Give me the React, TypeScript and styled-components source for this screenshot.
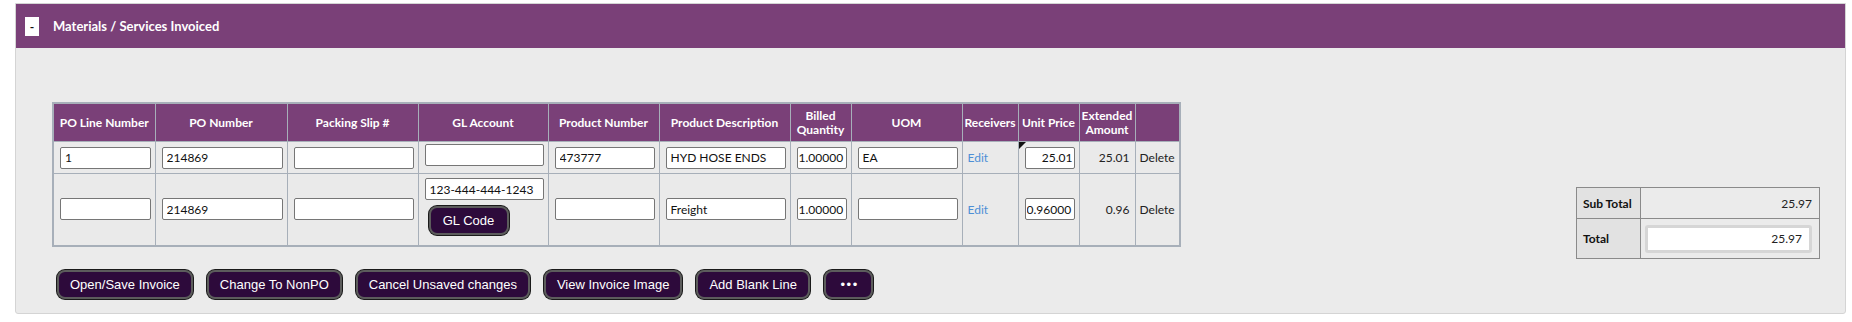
import React from "react";
import styled, { createGlobalStyle } from "styled-components";

const GlobalStyle = createGlobalStyle`
  html, body {
    margin: 0;
    padding: 0;
    background: #ffffff;
    font-family: Lato, "Noto Sans", Arial, sans-serif;
  }
`;

type Line = {
  lineNo: string;
  poNumber: string;
  packingSlip: string;
  glAccount: string;
  showGlButton: boolean;
  productNumber: string;
  description: string;
  quantity: string;
  uom: string;
  unitPrice: string;
  extended: string;
  hasNote: boolean;
};

const lines: Line[] = [
  {
    lineNo: "1",
    poNumber: "214869",
    packingSlip: "",
    glAccount: "",
    showGlButton: false,
    productNumber: "473777",
    description: "HYD HOSE ENDS",
    quantity: "1.00000",
    uom: "EA",
    unitPrice: "25.01",
    extended: "25.01",
    hasNote: true,
  },
  {
    lineNo: "",
    poNumber: "214869",
    packingSlip: "",
    glAccount: "123-444-444-1243",
    showGlButton: true,
    productNumber: "",
    description: "Freight",
    quantity: "1.00000",
    uom: "",
    unitPrice: "0.96000",
    extended: "0.96",
    hasNote: false,
  },
];

const columns = [
  { label: "PO Line Number", width: 102 },
  { label: "PO Number", width: 132 },
  { label: "Packing Slip #", width: 131 },
  { label: "GL Account", width: 130 },
  { label: "Product Number", width: 111 },
  { label: "Product Description", width: 131 },
  { label: "Billed Quantity", width: 61 },
  { label: "UOM", width: 111 },
  { label: "Receivers", width: 56 },
  { label: "Unit Price", width: 61 },
  { label: "Extended Amount", width: 56 },
  { label: "", width: 45 },
];

const actions = [
  "Open/Save Invoice",
  "Change To NonPO",
  "Cancel Unsaved changes",
  "View Invoice Image",
  "Add Blank Line",
];

export default function App() {
  return (
    <Page>
      <GlobalStyle />
      <Panel>
        <PanelHeader>
          <Toggle>-</Toggle>
          <Title>Materials / Services Invoiced</Title>
        </PanelHeader>
        <PanelBody>
          <Main>
            <LinesTable>
              <colgroup>
                {columns.map((c, i) => (
                  <col key={i} style={{ width: c.width }} />
                ))}
              </colgroup>
              <thead>
                <tr>
                  {columns.map((c, i) => (
                    <HeadCell key={i}>{c.label}</HeadCell>
                  ))}
                </tr>
              </thead>
              <tbody>
                {lines.map((l, i) => (
                  <BodyRow key={i} $tall={l.showGlButton}>
                    <Cell>
                      <TextInput defaultValue={l.lineNo} />
                    </Cell>
                    <Cell>
                      <TextInput defaultValue={l.poNumber} />
                    </Cell>
                    <Cell>
                      <TextInput defaultValue={l.packingSlip} />
                    </Cell>
                    <Cell>
                      <GlStack>
                        <TextInput defaultValue={l.glAccount} />
                        {l.showGlButton && <GlButton>GL Code</GlButton>}
                      </GlStack>
                    </Cell>
                    <Cell>
                      <TextInput defaultValue={l.productNumber} />
                    </Cell>
                    <Cell>
                      <TextInput defaultValue={l.description} />
                    </Cell>
                    <Cell>
                      <TextInput defaultValue={l.quantity} $small />
                    </Cell>
                    <Cell>
                      <TextInput defaultValue={l.uom} />
                    </Cell>
                    <LinkCell>
                      <EditLink href="#">Edit</EditLink>
                    </LinkCell>
                    <Cell>
                      {l.hasNote && <NoteMarker />}
                      <TextInput
                        defaultValue={l.unitPrice}
                        $small
                        $right={l.hasNote}
                      />
                    </Cell>
                    <AmountCell>{l.extended}</AmountCell>
                    <DeleteCell>Delete</DeleteCell>
                  </BodyRow>
                ))}
              </tbody>
            </LinesTable>

            <ButtonRow>
              {actions.map((a) => (
                <ActionButton key={a}>{a}</ActionButton>
              ))}
              <ActionButton $narrow>• • •</ActionButton>
            </ButtonRow>
          </Main>

          <TotalsTable>
            <tbody>
              <tr>
                <TotalLabel>Sub Total</TotalLabel>
                <TotalValue>25.97</TotalValue>
              </tr>
              <TotalRow>
                <TotalLabel>Total</TotalLabel>
                <TotalValue>
                  <TotalInput defaultValue="25.97" />
                </TotalValue>
              </TotalRow>
            </tbody>
          </TotalsTable>
        </PanelBody>
      </Panel>
    </Page>
  );
}

const Page = styled.div`
  padding: 3px 6px 0 15px;
`;

const Panel = styled.div`
  border: 1px solid #d4d4d4;
  border-radius: 0 0 3px 3px;
  background: #ebebeb;
`;

const PanelHeader = styled.div`
  height: 44px;
  background: #7a4078;
  display: flex;
  align-items: center;
  padding-left: 9px;
`;

const Toggle = styled.div`
  width: 14px;
  height: 19px;
  background: #ffffff;
  color: #111;
  font: bold 12px Lato, Arial, sans-serif;
  display: flex;
  align-items: center;
  justify-content: center;
`;

const Title = styled.div`
  margin-left: 14px;
  color: #ffffff;
  font-weight: 700;
  font-size: 13px;
`;

const PanelBody = styled.div`
  height: 265px;
  display: flex;
  justify-content: space-between;
`;

const Main = styled.div`
  padding: 54px 0 0 36px;
`;

const LinesTable = styled.table`
  table-layout: fixed;
  width: 1127px;
  border-collapse: collapse;
  border: 2px solid #a7afb9;
  font-size: 12px;
`;

const HeadCell = styled.th`
  height: 37px;
  padding: 0 1px;
  background: #7a4078;
  color: #ffffff;
  font-weight: 700;
  font-size: 12px;
  line-height: 14px;
  text-align: center;
  border: 1px solid #a7afb9;
`;

const BodyRow = styled.tr<{ $tall?: boolean }>`
  height: ${(p) => (p.$tall ? 72 : 32)}px;
`;

const Cell = styled.td`
  position: relative;
  padding: 0 4px 0 6px;
  border: 1px solid #a7afb9;
  vertical-align: middle;
  background: #eaeaea;
`;

const LinkCell = styled(Cell)`
  padding-left: 5px;
`;

const AmountCell = styled(Cell)`
  text-align: right;
  padding-right: 5px;
  color: #222;
`;

const DeleteCell = styled(Cell)`
  padding-left: 4px;
  color: #222;
`;

const TextInput = styled.input<{ $small?: boolean; $right?: boolean }>`
  box-sizing: border-box;
  width: 100%;
  height: 22px;
  margin: 0;
  padding: 0 ${(p) => (p.$small ? 1 : 4)}px;
  border: 1px solid #767676;
  border-radius: 2px;
  background: #ffffff;
  color: #111;
  font: 12px Lato, "Noto Sans", Arial, sans-serif;
  text-align: ${(p) => (p.$right ? "right" : "left")};
`;

const GlStack = styled.div`
  display: flex;
  flex-direction: column;
  align-items: flex-start;
  gap: 6px;
  padding: 0 0 5px;
`;

const GlButton = styled.button`
  margin-left: 4px;
  height: 29px;
  width: 80px;
  border: 2px solid #5c5c5c;
  border-radius: 8px;
  background: #2d0a3b;
  color: #ffffff;
  font: 13px "Liberation Sans", Arial, sans-serif;
  box-shadow: 0 0 0 1px #1a1a1a;
`;

const EditLink = styled.a`
  color: #4d8fd6;
  text-decoration: none;
  font-size: 12px;
`;

const NoteMarker = styled.span`
  position: absolute;
  left: 0;
  top: 0;
  width: 0;
  height: 0;
  border-top: 7px solid #111;
  border-right: 7px solid transparent;
`;

const ButtonRow = styled.div`
  display: flex;
  gap: 14px;
  margin: 23px 0 0 5px;
`;

const ActionButton = styled.button<{ $narrow?: boolean }>`
  height: 29px;
  padding: 0 ${(p) => (p.$narrow ? 8 : 11)}px;
  min-width: ${(p) => (p.$narrow ? 49 : 0)}px;
  border: 2px solid #5c5c5c;
  border-radius: 8px;
  background: #2d0a3b;
  color: #ffffff;
  font: 13px "Liberation Sans", Arial, sans-serif;
  box-shadow: 0 0 0 1px #1a1a1a;
  letter-spacing: ${(p) => (p.$narrow ? "-1px" : "0")};
`;

const TotalsTable = styled.table`
  align-self: flex-start;
  margin: 139px 25px 0 0;
  width: 244px;
  border-collapse: collapse;
  border: 1px solid #8a8a8a;
  font-size: 12px;
`;

const TotalRow = styled.tr`
  height: 40px;
`;

const TotalLabel = styled.td`
  width: 60px;
  height: 30px;
  padding: 0 6px;
  background: #e2e2e2;
  border: 1px solid #8a8a8a;
  font-weight: 700;
  color: #111;
`;

const TotalValue = styled.td`
  padding: 0 7px 0 4px;
  border: 1px solid #8a8a8a;
  text-align: right;
  color: #222;
`;

const TotalInput = styled.input`
  box-sizing: border-box;
  width: 167px;
  height: 28px;
  padding: 0 7px;
  border: 3px solid #d6d6d6;
  border-radius: 3px;
  background: #ffffff;
  text-align: right;
  font: 12px Lato, "Noto Sans", Arial, sans-serif;
  color: #222;
`;
